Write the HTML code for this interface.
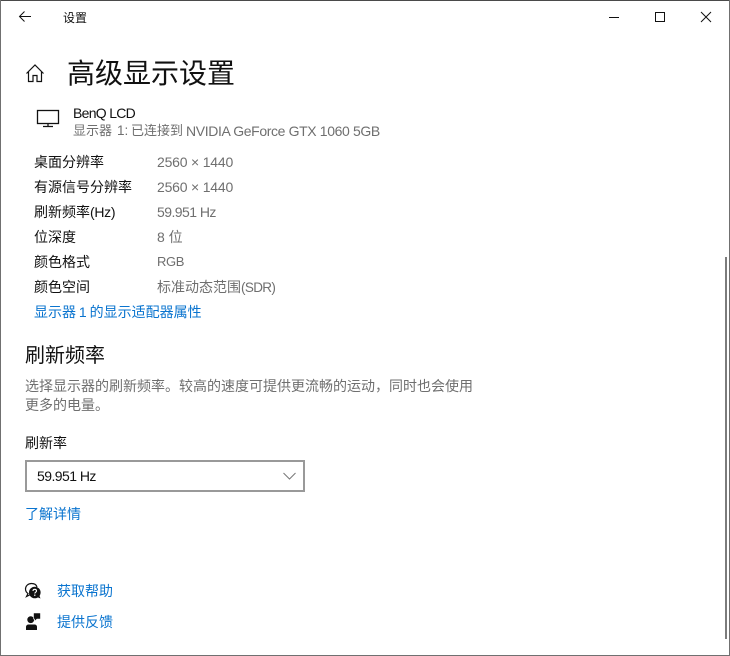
<!DOCTYPE html>
<html lang="zh-CN"><head><meta charset="utf-8"><title>设置</title>
<style>
html,body{margin:0;padding:0;background:#fff}
#w{position:relative;width:730px;height:656px;overflow:hidden;background:#fff;font-family:"Liberation Sans","Noto Sans CJK SC",sans-serif;font-size:14px;color:#111}
#w div.t{position:absolute;white-space:nowrap;line-height:20px;height:20px}
.g{color:#6f6f6f}.b{color:#0a74cf}
svg{position:absolute;overflow:visible}
.e{position:absolute;background:#606060}
</style></head><body><div id="w">
<div class="e" style="left:0;top:0;width:730px;height:1px;background:#4a4a4a"></div>
<div class="e" style="left:0;top:0;width:1px;height:656px;background:#707070"></div>
<div class="e" style="right:0;top:0;width:1px;height:656px;background:#707070"></div>
<div class="e" style="left:0;bottom:0;width:730px;height:1px;background:#707070"></div>
<svg style="left:0;top:0" width="730" height="656" fill="none" stroke="#111" stroke-width="1">
<path d="M31 16.500H19.500M24.500 11.500l-5 5 5 5"/>
<path d="M609 17.500h10"/>
<rect x="655.500" y="12.500" width="9" height="9"/>
<path d="M701 12l10 10M711 12l-10 10"/>
<path d="M26.500 73.500L35 65l8.500 8.500M28.500 71.500V81.500h4.500V75.500h4v6h4.500V71.500" stroke-width="1.200"/>
<rect x="37.500" y="110.500" width="21" height="13" stroke-width="1.300"/>
<path d="M48 124v2.500M43 126.500h10" stroke-width="1.300"/>
<path d="M31.500 583.500c-3.500 0-6 2.500-6 5.500 0 2 1 3.500 2.500 4.500l-1.500 3 4-2c.5 0 1 .1 1.500 0" stroke-width="1.200"/>
<path d="M31.500 583.500c3 0 5 1.500 5.500 3.500" stroke-width="1.200"/>
<circle cx="34.800" cy="592.500" r="5.800" fill="#111" stroke="none"/>
<path d="M37 597l3.500 1.500-1.500-4z" fill="#111" stroke="none"/>
<path d="M33 591c0-2.200 3.500-2.200 3.500 0 0 1.200-1.700 1.200-1.700 2.500M34.800 594.500v1.500" stroke="#fff" stroke-width="1.100"/>
<circle cx="30.700" cy="619.700" r="3.400" fill="#111" stroke="none"/>
<path d="M26 630v-3c0-1.700 1.300-2.500 2.500-2.500h6c1.300 0 2.500.8 2.500 2.500v3z" fill="#111" stroke="none"/>
<path d="M33.500 613h7v6h-3.500l-2.500 2.300V619h-1z" fill="#111" stroke="#fff" stroke-width=".6"/>
<path d="M283.500 473l6 6 6-6" stroke="#777"/>
</svg>
<div class="t" style="left:63px;top:8px;font-size:12px">设置</div>
<div class="t" style="left:67px;top:54px;font-size:28px;line-height:40px;height:40px">高级显示设置</div>
<div class="t" style="left:73px;top:103px;letter-spacing:-.7px">BenQ LCD</div>
<div class="t g" style="left:73px;top:121px;font-size:13px">显示器</div>
<div class="t g" style="left:117px;top:121px;font-size:13.500px">1:</div>
<div class="t g" style="left:131px;top:121px;font-size:13px">已连接到</div>
<div class="t g" style="left:186px;top:121px;letter-spacing:-.37px">NVIDIA GeForce GTX 1060 5GB</div>
<div class="t" style="left:34px;top:152px">桌面分辨率</div><div class="t g" style="left:157px;top:152px;letter-spacing:-.2px">2560 × 1440</div>
<div class="t" style="left:34px;top:177px">有源信号分辨率</div><div class="t g" style="left:157px;top:177px;letter-spacing:-.2px">2560 × 1440</div>
<div class="t" style="left:34px;top:202px">刷新频率<span style="letter-spacing:-.3px">(Hz)</span></div><div class="t g" style="left:157px;top:202px;letter-spacing:-.55px">59.951 Hz</div>
<div class="t" style="left:34px;top:227px">位深度</div><div class="t g" style="left:157px;top:227px">8 位</div>
<div class="t" style="left:34px;top:252px">颜色格式</div><div class="t g" style="left:157px;top:252px;font-size:13px;letter-spacing:-.4px">RGB</div>
<div class="t" style="left:34px;top:277px">颜色空间</div><div class="t g" style="left:157px;top:277px">标准动态范围<span style="font-size:13.500px;letter-spacing:-.65px">(SDR)</span></div>
<div class="t b" style="left:34px;top:302px;word-spacing:-1px">显示器 1 的显示适配器属性</div>
<div class="t" style="left:25px;top:342px;font-size:20px;line-height:28px;height:28px">刷新频率</div>
<div class="t g" style="left:25px;top:376px">选择显示器的刷新频率。较高的速度可提供更流畅的运动，同时也会使用</div>
<div class="t g" style="left:25px;top:395px">更多的电量。</div>
<div class="t" style="left:25px;top:433px">刷新率</div>
<div style="position:absolute;left:25px;top:460px;width:276px;height:28px;border:2px solid #999"></div>
<div class="t" style="left:37px;top:466px;letter-spacing:-.55px">59.951 Hz</div>
<div class="t b" style="left:25px;top:504px">了解详情</div>
<div class="t b" style="left:57px;top:581px">获取帮助</div>
<div class="t b" style="left:57px;top:612px">提供反馈</div>
<div style="position:absolute;left:725px;top:257px;width:2px;height:382px;background:#7c7c7c"></div>
</div></body></html>
